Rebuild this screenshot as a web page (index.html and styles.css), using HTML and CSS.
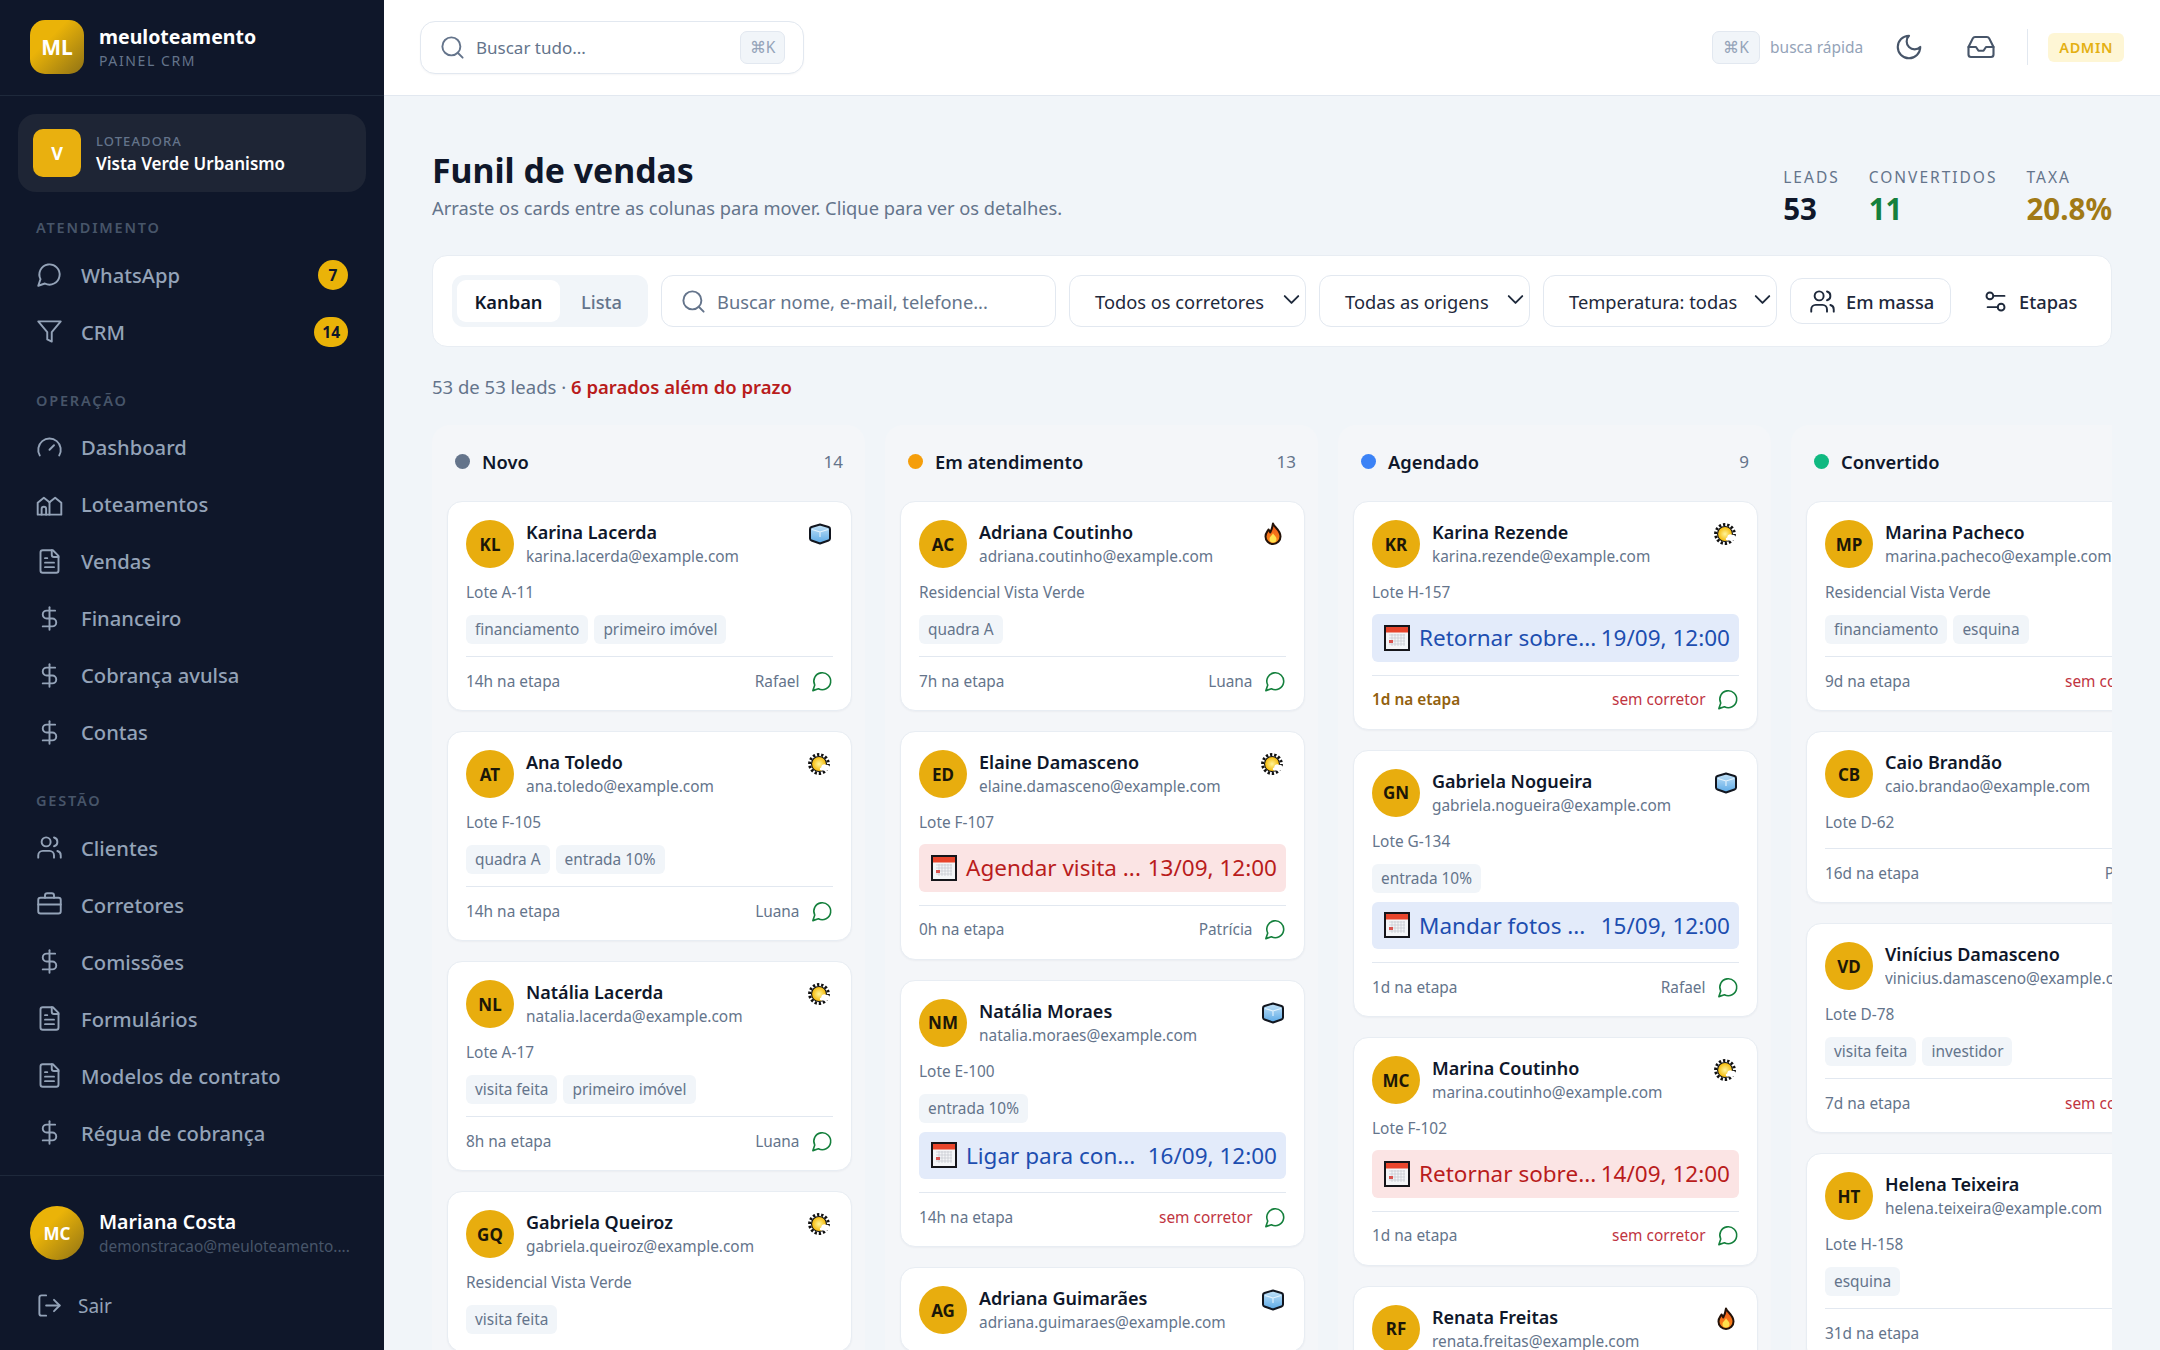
FILE: index.html
```html
<!DOCTYPE html>
<html lang="pt-BR">
<head>
<meta charset="utf-8">
<title>Funil de vendas</title>
<link rel="stylesheet" href="styles.css">
</head>
<body>
<svg class="defs" width="0" height="0" aria-hidden="true">
  <symbol id="i-chat" viewBox="0 0 24 24"><path d="M7.9 20A9 9 0 1 0 4 16.1L2 22Z"/></symbol>
  <symbol id="i-filter" viewBox="0 0 24 24"><path d="M22 3H2l8 9.46V19l4 2v-8.54L22 3Z"/></symbol>
  <symbol id="i-gauge" viewBox="0 0 24 24"><path d="m12 14 4-4"/><path d="M3.34 19a10 10 0 1 1 17.32 0"/></symbol>
  <symbol id="i-homes" viewBox="0 0 24 24"><path d="M1.5 21V10.5L7 6l5 4 5-4 5.500 4.500V21Z"/><path d="M12 10v11"/><path d="M5 21v-5a2 2 0 0 1 4 0v5"/></symbol>
  <symbol id="i-file" viewBox="0 0 24 24"><path d="M15 2H6a2 2 0 0 0-2 2v16a2 2 0 0 0 2 2h12a2 2 0 0 0 2-2V7Z"/><path d="M14 2v4a2 2 0 0 0 2 2h4"/><path d="M10 9H8"/><path d="M16 13H8"/><path d="M16 17H8"/></symbol>
  <symbol id="i-dollar" viewBox="0 0 24 24"><path d="M12 2v20"/><path d="M17 5H9.500a3.500 3.500 0 0 0 0 7h5a3.500 3.500 0 0 1 0 7H6"/></symbol>
  <symbol id="i-users" viewBox="0 0 24 24"><path d="M16 21v-2a4 4 0 0 0-4-4H6a4 4 0 0 0-4 4v2"/><circle cx="9" cy="7" r="4"/><path d="M22 21v-2a4 4 0 0 0-3-3.870"/><path d="M16 3.130a4 4 0 0 1 0 7.750"/></symbol>
  <symbol id="i-case" viewBox="0 0 24 24"><path d="M16 6V4a2 2 0 0 0-2-2h-4a2 2 0 0 0-2 2v2"/><rect x="2" y="6" width="20" height="14" rx="2"/><path d="M2 12h20"/></symbol>
  <symbol id="i-logout" viewBox="0 0 24 24"><path d="M9 21H5a2 2 0 0 1-2-2V5a2 2 0 0 1 2-2h4"/><path d="m16 17 5-5-5-5"/><path d="M21 12H9"/></symbol>
  <symbol id="i-search" viewBox="0 0 24 24"><circle cx="11" cy="11" r="8"/><path d="m21 21-4.350-4.350"/></symbol>
  <symbol id="i-moon" viewBox="0 0 24 24"><path d="M12 3a6 6 0 0 0 9 9 9 9 0 1 1-9-9Z"/></symbol>
  <symbol id="i-inbox" viewBox="0 0 24 24"><path d="M22 12h-6l-2 3h-4l-2-3H2"/><path d="M5.450 5.110 2 12v6a2 2 0 0 0 2 2h16a2 2 0 0 0 2-2v-6l-3.450-6.890A2 2 0 0 0 16.760 4H7.240a2 2 0 0 0-1.790 1.110Z"/></symbol>
  <symbol id="i-sliders" viewBox="0 0 24 24"><path d="M20 7h-9"/><path d="M14 17H5"/><circle cx="17" cy="17" r="3"/><circle cx="7" cy="7" r="3"/></symbol>
  <symbol id="i-chev" viewBox="0 0 24 24"><path d="m6 9 6 6 6-6"/></symbol>

  <linearGradient id="g-ice" x1="0" y1="0" x2="0" y2="1"><stop offset="0" stop-color="#c4e3f8"/><stop offset="1" stop-color="#5ba9e6"/></linearGradient>
  <radialGradient id="g-sun"><stop offset="0" stop-color="#fff59a"/><stop offset="1" stop-color="#f5bb0c"/></radialGradient>
  <linearGradient id="g-fire" x1="0" y1="0" x2="0" y2="1"><stop offset="0" stop-color="#ee5518"/><stop offset="1" stop-color="#fb8c1a"/></linearGradient>

  <symbol id="e-ice" viewBox="0 0 24 24"><path d="M12 2.500 20.500 5q1.500.500 1.500 2v9.500q0 1.500-1.500 2L12 21.500l-8.500-3Q2 18 2 16.500V7q0-1.500 1.500-2Z" fill="url(#g-ice)" stroke="#12161f" stroke-width="2" stroke-linejoin="round"/><path d="M4 7.500 12 10l8-2.500M12 10v5" fill="none" stroke="#e4f3fd" stroke-width="1.100"/></symbol>
  <symbol id="e-sun" viewBox="0 0 24 24"><circle cx="11" cy="12" r="9.400" fill="none" stroke="#111" stroke-width="3" stroke-dasharray="2.300 1.900"/><circle cx="11" cy="12" r="8" fill="#111"/><circle cx="11" cy="12" r="6.900" fill="url(#g-sun)"/><path d="M13.500 18.500c-2 0-2.300-2.700-.3-3 .1-2.800 3-4 5-2.600 1.800-.5 3.300.6 3.500 2.300 1 .5 1 3.300-1 3.300Z" fill="#fff"/></symbol>
  <symbol id="e-fire" viewBox="0 0 24 24"><path d="M12 1.500c1 3.500 7.500 6.500 7.500 13a7.500 7.500 0 0 1-15 0c0-3.500 2-5 3-7 1 1 1.500 2 1.700 3C10.500 8 11.500 5 12 1.500Z" fill="url(#g-fire)" stroke="#231208" stroke-width="2" stroke-linejoin="round"/><path d="M12 11c.5 2 3.500 3.500 3.500 6a3.500 3.500 0 0 1-7 0c0-2.500 3-3.500 3.500-6Z" fill="#ffe14d"/></symbol>
  <symbol id="e-cal" viewBox="0 0 26 26"><rect x="1" y="1" width="24" height="24" fill="#f4f5f7" stroke="#15151a" stroke-width="2"/><rect x="2" y="2" width="22" height="5.500" fill="#e8452c"/><path d="M5 10h16M5 13h16M5 16h16M5 19h16M8 9v12M11 9v12M14 9v12M17 9v12M20 9v12" stroke="#c3c7ce" stroke-width=".7"/><rect x="5" y="15" width="4" height="3" fill="#d9534f"/></symbol>
</svg>

<div class="app">
  <aside class="sidebar">
    <div class="brand">
      <div class="brand-logo">ML</div>
      <div>
        <div class="brand-name">meuloteamento</div>
        <div class="brand-sub">PAINEL CRM</div>
      </div>
    </div>
    <div class="company">
      <div class="company-logo">V</div>
      <div class="company-info">
        <div class="company-label">LOTEADORA</div>
        <div class="company-name">Vista Verde Urbanismo</div>
      </div>
    </div>
    <nav class="nav">
      <div class="nav-label">ATENDIMENTO</div>
      <div class="nav-item"><svg class="ico"><use href="#i-chat"/></svg><span class="nav-text">WhatsApp</span><span class="nav-badge">7</span></div>
      <div class="nav-item"><svg class="ico"><use href="#i-filter"/></svg><span class="nav-text">CRM</span><span class="nav-badge">14</span></div>
      <div class="nav-label nav-label-gap">OPERAÇÃO</div>
      <div class="nav-item"><svg class="ico"><use href="#i-gauge"/></svg><span class="nav-text">Dashboard</span></div>
      <div class="nav-item"><svg class="ico"><use href="#i-homes"/></svg><span class="nav-text">Loteamentos</span></div>
      <div class="nav-item"><svg class="ico"><use href="#i-file"/></svg><span class="nav-text">Vendas</span></div>
      <div class="nav-item"><svg class="ico"><use href="#i-dollar"/></svg><span class="nav-text">Financeiro</span></div>
      <div class="nav-item"><svg class="ico"><use href="#i-dollar"/></svg><span class="nav-text">Cobrança avulsa</span></div>
      <div class="nav-item"><svg class="ico"><use href="#i-dollar"/></svg><span class="nav-text">Contas</span></div>
      <div class="nav-label nav-label-gap">GESTÃO</div>
      <div class="nav-item"><svg class="ico"><use href="#i-users"/></svg><span class="nav-text">Clientes</span></div>
      <div class="nav-item"><svg class="ico"><use href="#i-case"/></svg><span class="nav-text">Corretores</span></div>
      <div class="nav-item"><svg class="ico"><use href="#i-dollar"/></svg><span class="nav-text">Comissões</span></div>
      <div class="nav-item"><svg class="ico"><use href="#i-file"/></svg><span class="nav-text">Formulários</span></div>
      <div class="nav-item"><svg class="ico"><use href="#i-file"/></svg><span class="nav-text">Modelos de contrato</span></div>
      <div class="nav-item"><svg class="ico"><use href="#i-dollar"/></svg><span class="nav-text">Régua de cobrança</span></div>
    </nav>
    <div class="side-foot">
      <div class="user">
        <div class="user-avatar">MC</div>
        <div class="user-info">
          <div class="user-name">Mariana Costa</div>
          <div class="user-mail">demonstracao@meuloteamento....</div>
        </div>
      </div>
      <div class="logout"><svg class="ico"><use href="#i-logout"/></svg><span>Sair</span></div>
    </div>
  </aside>

  <div class="main">
    <header class="topbar">
      <div class="global-search">
        <svg class="ico ico-search"><use href="#i-search"/></svg>
        <span class="global-text">Buscar tudo...</span>
        <span class="kbd">⌘K</span>
      </div>
      <div class="top-right">
        <span class="kbd kbd-wide">⌘K</span>
        <span class="top-hint">busca rápida</span>
        <svg class="ico top-ico top-moon"><use href="#i-moon"/></svg>
        <svg class="ico top-ico top-inbox"><use href="#i-inbox"/></svg>
        <span class="top-sep"></span>
        <span class="role">ADMIN</span>
      </div>
    </header>

    <main class="content">
      <div class="heading">
        <div>
          <h1 class="title">Funil de vendas</h1>
          <p class="subtitle">Arraste os cards entre as colunas para mover. Clique para ver os detalhes.</p>
        </div>
        <div class="stats">
          <div><div class="stat-label">LEADS</div><div class="stat-value">53</div></div>
          <div><div class="stat-label">CONVERTIDOS</div><div class="stat-value v-green">11</div></div>
          <div><div class="stat-label">TAXA</div><div class="stat-value v-gold">20.8%</div></div>
        </div>
      </div>

      <div class="toolbar">
        <div class="tabs"><span class="tab tab-on">Kanban</span><span class="tab">Lista</span></div>
        <div class="field field-search"><svg class="ico ico-search"><use href="#i-search"/></svg><span class="placeholder">Buscar nome, e-mail, telefone...</span></div>
        <div class="field sel sel-1"><span>Todos os corretores</span><svg class="chev"><use href="#i-chev"/></svg></div>
        <div class="field sel sel-2"><span>Todas as origens</span><svg class="chev"><use href="#i-chev"/></svg></div>
        <div class="field sel sel-3"><span>Temperatura: todas</span><svg class="chev"><use href="#i-chev"/></svg></div>
        <div class="btn btn-line"><svg class="ico btn-ico"><use href="#i-users"/></svg>Em massa</div>
        <div class="btn"><svg class="ico btn-ico"><use href="#i-sliders"/></svg>Etapas</div>
      </div>

      <p class="summary">53 de 53 leads · <strong class="late">6 parados além do prazo</strong></p>

      <div class="board">

        <section class="col">
          <div class="col-head"><span class="dot d-slate"></span><span class="col-name">Novo</span><span class="col-count">14</span></div>
          <article class="card">
            <div class="card-top"><div class="avatar">KL</div><div class="who"><div class="name">Karina Lacerda</div><div class="mail">karina.lacerda@example.com</div></div><svg class="temp"><use href="#e-ice"/></svg></div>
            <div class="lot">Lote A-11</div>
            <div class="tags"><span class="tag">financiamento</span><span class="tag">primeiro imóvel</span></div>
            <div class="foot"><span>14h na etapa</span><span class="owner">Rafael</span><svg class="ico wa"><use href="#i-chat"/></svg></div>
          </article>
          <article class="card">
            <div class="card-top"><div class="avatar">AT</div><div class="who"><div class="name">Ana Toledo</div><div class="mail">ana.toledo@example.com</div></div><svg class="temp"><use href="#e-sun"/></svg></div>
            <div class="lot">Lote F-105</div>
            <div class="tags"><span class="tag">quadra A</span><span class="tag">entrada 10%</span></div>
            <div class="foot"><span>14h na etapa</span><span class="owner">Luana</span><svg class="ico wa"><use href="#i-chat"/></svg></div>
          </article>
          <article class="card">
            <div class="card-top"><div class="avatar">NL</div><div class="who"><div class="name">Natália Lacerda</div><div class="mail">natalia.lacerda@example.com</div></div><svg class="temp"><use href="#e-sun"/></svg></div>
            <div class="lot">Lote A-17</div>
            <div class="tags"><span class="tag">visita feita</span><span class="tag">primeiro imóvel</span></div>
            <div class="foot"><span>8h na etapa</span><span class="owner">Luana</span><svg class="ico wa"><use href="#i-chat"/></svg></div>
          </article>
          <article class="card">
            <div class="card-top"><div class="avatar">GQ</div><div class="who"><div class="name">Gabriela Queiroz</div><div class="mail">gabriela.queiroz@example.com</div></div><svg class="temp"><use href="#e-sun"/></svg></div>
            <div class="lot">Residencial Vista Verde</div>
            <div class="tags"><span class="tag">visita feita</span></div>
          </article>
        </section>

        <section class="col">
          <div class="col-head"><span class="dot d-amber"></span><span class="col-name">Em atendimento</span><span class="col-count">13</span></div>
          <article class="card">
            <div class="card-top"><div class="avatar">AC</div><div class="who"><div class="name">Adriana Coutinho</div><div class="mail">adriana.coutinho@example.com</div></div><svg class="temp"><use href="#e-fire"/></svg></div>
            <div class="lot">Residencial Vista Verde</div>
            <div class="tags"><span class="tag">quadra A</span></div>
            <div class="foot"><span>7h na etapa</span><span class="owner">Luana</span><svg class="ico wa"><use href="#i-chat"/></svg></div>
          </article>
          <article class="card">
            <div class="card-top"><div class="avatar">ED</div><div class="who"><div class="name">Elaine Damasceno</div><div class="mail">elaine.damasceno@example.com</div></div><svg class="temp"><use href="#e-sun"/></svg></div>
            <div class="lot">Lote F-107</div>
            <div class="task task-red"><svg class="cal"><use href="#e-cal"/></svg><span class="task-name">Agendar visita ...</span><span>13/09, 12:00</span></div>
            <div class="foot"><span>0h na etapa</span><span class="owner">Patrícia</span><svg class="ico wa"><use href="#i-chat"/></svg></div>
          </article>
          <article class="card">
            <div class="card-top"><div class="avatar">NM</div><div class="who"><div class="name">Natália Moraes</div><div class="mail">natalia.moraes@example.com</div></div><svg class="temp"><use href="#e-ice"/></svg></div>
            <div class="lot">Lote E-100</div>
            <div class="tags"><span class="tag">entrada 10%</span></div>
            <div class="task task-blue"><svg class="cal"><use href="#e-cal"/></svg><span class="task-name">Ligar para con...</span><span>16/09, 12:00</span></div>
            <div class="foot"><span>14h na etapa</span><span class="owner none">sem corretor</span><svg class="ico wa"><use href="#i-chat"/></svg></div>
          </article>
          <article class="card">
            <div class="card-top"><div class="avatar">AG</div><div class="who"><div class="name">Adriana Guimarães</div><div class="mail">adriana.guimaraes@example.com</div></div><svg class="temp"><use href="#e-ice"/></svg></div>
          </article>
        </section>

        <section class="col">
          <div class="col-head"><span class="dot d-blue"></span><span class="col-name">Agendado</span><span class="col-count">9</span></div>
          <article class="card">
            <div class="card-top"><div class="avatar">KR</div><div class="who"><div class="name">Karina Rezende</div><div class="mail">karina.rezende@example.com</div></div><svg class="temp"><use href="#e-sun"/></svg></div>
            <div class="lot">Lote H-157</div>
            <div class="task task-blue"><svg class="cal"><use href="#e-cal"/></svg><span class="task-name">Retornar sobre...</span><span>19/09, 12:00</span></div>
            <div class="foot"><span class="aging">1d na etapa</span><span class="owner none">sem corretor</span><svg class="ico wa"><use href="#i-chat"/></svg></div>
          </article>
          <article class="card">
            <div class="card-top"><div class="avatar">GN</div><div class="who"><div class="name">Gabriela Nogueira</div><div class="mail">gabriela.nogueira@example.com</div></div><svg class="temp"><use href="#e-ice"/></svg></div>
            <div class="lot">Lote G-134</div>
            <div class="tags"><span class="tag">entrada 10%</span></div>
            <div class="task task-blue"><svg class="cal"><use href="#e-cal"/></svg><span class="task-name">Mandar fotos ...</span><span>15/09, 12:00</span></div>
            <div class="foot"><span>1d na etapa</span><span class="owner">Rafael</span><svg class="ico wa"><use href="#i-chat"/></svg></div>
          </article>
          <article class="card">
            <div class="card-top"><div class="avatar">MC</div><div class="who"><div class="name">Marina Coutinho</div><div class="mail">marina.coutinho@example.com</div></div><svg class="temp"><use href="#e-sun"/></svg></div>
            <div class="lot">Lote F-102</div>
            <div class="task task-red"><svg class="cal"><use href="#e-cal"/></svg><span class="task-name">Retornar sobre...</span><span>14/09, 12:00</span></div>
            <div class="foot"><span>1d na etapa</span><span class="owner none">sem corretor</span><svg class="ico wa"><use href="#i-chat"/></svg></div>
          </article>
          <article class="card">
            <div class="card-top"><div class="avatar">RF</div><div class="who"><div class="name">Renata Freitas</div><div class="mail">renata.freitas@example.com</div></div><svg class="temp"><use href="#e-fire"/></svg></div>
          </article>
        </section>

        <section class="col">
          <div class="col-head"><span class="dot d-green"></span><span class="col-name">Convertido</span><span class="col-count">11</span></div>
          <article class="card">
            <div class="card-top"><div class="avatar">MP</div><div class="who"><div class="name">Marina Pacheco</div><div class="mail">marina.pacheco@example.com</div></div><svg class="temp"><use href="#e-sun"/></svg></div>
            <div class="lot">Residencial Vista Verde</div>
            <div class="tags"><span class="tag">financiamento</span><span class="tag">esquina</span></div>
            <div class="foot"><span>9d na etapa</span><span class="owner none">sem corretor</span><svg class="ico wa"><use href="#i-chat"/></svg></div>
          </article>
          <article class="card">
            <div class="card-top"><div class="avatar">CB</div><div class="who"><div class="name">Caio Brandão</div><div class="mail">caio.brandao@example.com</div></div><svg class="temp"><use href="#e-sun"/></svg></div>
            <div class="lot">Lote D-62</div>
            <div class="foot"><span>16d na etapa</span><span class="owner">Patrícia</span><svg class="ico wa"><use href="#i-chat"/></svg></div>
          </article>
          <article class="card">
            <div class="card-top"><div class="avatar">VD</div><div class="who"><div class="name">Vinícius Damasceno</div><div class="mail">vinicius.damasceno@example.com</div></div><svg class="temp"><use href="#e-sun"/></svg></div>
            <div class="lot">Lote D-78</div>
            <div class="tags"><span class="tag">visita feita</span><span class="tag">investidor</span></div>
            <div class="foot"><span>7d na etapa</span><span class="owner none">sem corretor</span><svg class="ico wa"><use href="#i-chat"/></svg></div>
          </article>
          <article class="card">
            <div class="card-top"><div class="avatar">HT</div><div class="who"><div class="name">Helena Teixeira</div><div class="mail">helena.teixeira@example.com</div></div><svg class="temp"><use href="#e-sun"/></svg></div>
            <div class="lot">Lote H-158</div>
            <div class="tags"><span class="tag">esquina</span></div>
            <div class="foot"><span>31d na etapa</span><span class="owner">Rafael</span><svg class="ico wa"><use href="#i-chat"/></svg></div>
          </article>
        </section>

      </div>
    </main>
  </div>
</div>
</body>
</html>
```

FILE: styles.css
```css
* { box-sizing: border-box; }
html, body { margin: 0; height: 100%; overflow: hidden; }
body { font-family: "Noto Sans", "Open Sans", sans-serif; color: #0f172a; background: #f1f5f9; }
.defs { position: absolute; }
.ico { width: 27px; height: 27px; fill: none; stroke: currentColor; stroke-width: 1.7; stroke-linecap: round; stroke-linejoin: round; flex: none; }

.app { display: flex; height: 1350px; }

/* Sidebar */
.sidebar { width: 384px; flex: none; height: 1350px; background: #0f172a; display: flex; flex-direction: column; }
.brand { height: 96px; padding: 0 30px 1px; display: flex; align-items: center; gap: 15px; border-bottom: 1px solid #1e293b; }
.brand-logo { width: 54px; height: 54px; border-radius: 15px; background: linear-gradient(135deg, #eab308 35%, #8f7215); color: #fff; font-weight: 700; font-size: 21px; display: flex; align-items: center; justify-content: center; }
.brand-name { font-size: 19.5px; font-weight: 700; color: #fff; line-height: 28px; }
.brand-sub { font-size: 14px; letter-spacing: 1.6px; color: #64748b; line-height: 20px; }
.company { margin: 18px 18px 0; height: 78px; border-radius: 18px; background: #1e2535; padding: 0 15px; display: flex; align-items: center; gap: 15px; }
.company-logo { width: 48px; height: 48px; border-radius: 10px; background: #e9b00f; color: #fff; font-weight: 700; font-size: 18px; display: flex; align-items: center; justify-content: center; }
.company-info { padding-top: 2px; }
.company-label { font-size: 13px; letter-spacing: 1.1px; color: #64748b; line-height: 20px; font-weight: 500; }
.company-name { font-size: 17px; font-weight: 600; color: #fff; line-height: 26px; }
.nav { padding: 24px 0 0 36px; }
.nav-label { font-size: 14.5px; font-weight: 600; letter-spacing: 1.8px; color: #475569; line-height: 22px; margin-bottom: 8px; }
.nav-label-gap { margin-top: 28.5px; }
.nav-item { height: 57px; display: flex; align-items: center; color: #94a3b8; padding-right: 36px; }
.nav-text { font-size: 20.2px; font-weight: 500; margin-left: 18px; flex: 1; }
.nav-badge { min-width: 30px; height: 30px; padding: 0 8px; border-radius: 15px; background: #eab308; color: #0f172a; font-size: 15.5px; font-weight: 700; display: flex; align-items: center; justify-content: center; }
.side-foot { margin-top: auto; border-top: 1px solid #1e293b; padding: 30px 30px 0; height: 175px; }
.user { display: flex; align-items: center; gap: 15px; }
.user-avatar { width: 54px; height: 54px; border-radius: 50%; flex: none; background: linear-gradient(135deg, #eab308 35%, #8f7215); color: #fff; font-size: 17px; font-weight: 700; display: flex; align-items: center; justify-content: center; }
.user-info { min-width: 0; }
.user-name { font-size: 19.5px; font-weight: 600; color: #fff; line-height: 28px; }
.user-mail { font-size: 15.4px; color: #475569; line-height: 22px; white-space: nowrap; }
.logout { margin: 32px 0 0 6px; display: flex; align-items: center; gap: 15px; color: #94a3b8; font-size: 19px; }

/* Main */
.main { flex: 1; min-width: 0; display: flex; flex-direction: column; }
.topbar { height: 96px; flex: none; background: #fff; border-bottom: 1px solid #e2e8f0; padding: 0 36px 1px; display: flex; align-items: center; justify-content: space-between; }
.global-search { width: 384px; height: 53px; border: 1px solid #e2e8f0; border-radius: 15px; display: flex; align-items: center; padding: 0 18px; background: #fff; box-shadow: 0 1px 2px rgba(15, 23, 42, .04); }
.ico-search { color: #64748b; }
.global-text { margin-left: 10px; flex: 1; font-size: 17px; color: #64748b; }
.kbd { height: 33px; min-width: 45px; padding: 0 7px; border: 1px solid #e2e8f0; border-radius: 7px; background: #f1f5f9; color: #94a3b8; font-size: 15.5px; display: flex; align-items: center; justify-content: center; }
.kbd-wide { width: 48px; }
.top-right { display: flex; align-items: center; }
.top-hint { margin-left: 10px; font-size: 15.5px; color: #94a3b8; }
.top-ico { width: 30px; height: 30px; color: #475569; }
.top-moon { margin-left: 31px; }
.top-inbox { margin-left: 42px; }
.top-sep { width: 1px; height: 36px; background: #e2e8f0; margin: 0 20px 0 31px; }
.role { height: 29px; padding: 0 11px; border-radius: 6px; background: #fef6d5; color: #e4b012; font-size: 14.5px; font-weight: 600; letter-spacing: .6px; display: flex; align-items: center; }

.content { flex: 1; min-height: 0; padding: 50px 48px 0; display: flex; flex-direction: column; }
.heading { height: 76px; flex: none; display: flex; justify-content: space-between; align-items: flex-start; }
.title { margin: 0; font-size: 33.8px; font-weight: 700; line-height: 48px; }
.subtitle { margin: 0; font-size: 18.3px; color: #64748b; line-height: 28px; }
.stats { display: flex; gap: 29px; padding-top: 20px; }
.stat-label { font-size: 15.5px; letter-spacing: 2px; color: #64748b; line-height: 22px; }
.stat-value { font-size: 29.5px; font-weight: 700; line-height: 42px; }
.v-green { color: #15803d; }
.v-gold { color: #a17a16; }

.toolbar { margin-top: 33px; height: 92px; flex: none; background: #fff; border: 1px solid #e8edf3; border-radius: 15px; padding: 0 19px; display: flex; align-items: center; gap: 13px; }
.tabs { height: 52px; width: 196px; padding: 5px; border-radius: 12px; background: #f1f5f9; display: flex; flex: none; }
.tab { height: 42px; width: 83px; flex: none; display: flex; align-items: center; justify-content: center; font-size: 18.3px; font-weight: 500; color: #64748b; }
.tab-on { width: 103px; background: #fff; border-radius: 9px; color: #0f172a; font-weight: 600; }
.field { height: 52px; border: 1px solid #e2e8f0; border-radius: 12px; background: #fff; display: flex; align-items: center; flex: none; font-size: 18.3px; color: #1e293b; white-space: nowrap; }
.field-search { width: 395px; padding: 0 18px; }
.placeholder { margin-left: 10px; color: #64748b; }
.sel { justify-content: space-between; padding: 0 0 0 25px; }
.sel-1 { width: 237px; }
.sel-2 { width: 211px; }
.sel-3 { width: 234px; }
.chev { width: 27px; height: 27px; fill: none; stroke: #1e293b; stroke-width: 1.7; stroke-linecap: round; stroke-linejoin: round; margin-top: -3px; }
.btn { height: 46px; padding: 0 18px; display: flex; align-items: center; gap: 10px; flex: none; font-size: 18.3px; font-weight: 500; color: #1e293b; border-radius: 12px; white-space: nowrap; }
.btn-line { border: 1px solid #e2e8f0; width: 161px; }
.btn-ico { color: #1e293b; }

.summary { margin: 25px 0 0; font-size: 18.5px; line-height: 30px; color: #64748b; }
.late { color: #b91c1c; font-weight: 600; }

.board { margin-top: 23px; flex: 1; min-height: 0; display: flex; gap: 20px; overflow: hidden; }
.col { width: 433px; flex: none; padding: 21px 13px 0 15px; background: #f4f6f9; border-radius: 18px 18px 0 0; }
.col-head { height: 30px; display: flex; align-items: center; padding: 0 9px 0 8px; margin-bottom: 25px; }
.dot { width: 15px; height: 15px; border-radius: 50%; flex: none; }
.d-slate { background: #64748b; }
.d-amber { background: #f59e0b; }
.d-blue { background: #3b82f6; }
.d-green { background: #10b981; }
.col-name { margin-left: 12px; font-size: 18.3px; font-weight: 600; flex: 1; }
.col-count { font-size: 17px; color: #64748b; }

.card { background: #fff; border: 1px solid #e8edf3; border-radius: 15px; padding: 18px 18px 17px; margin-bottom: 20px; box-shadow: 0 1px 2px rgba(15, 23, 42, .04); }
.card-top { display: flex; align-items: flex-start; }
.avatar { width: 48px; height: 48px; flex: none; border-radius: 50%; background: #e8ad0e; color: #1c1708; font-size: 17px; font-weight: 700; display: flex; align-items: center; justify-content: center; }
.who { margin: -1px 0 -1px 12px; flex: 1; min-width: 0; }
.name { font-size: 18px; font-weight: 600; line-height: 26px; white-space: nowrap; }
.mail { font-size: 15.4px; line-height: 24px; color: #64748b; white-space: nowrap; overflow: hidden; }
.temp { width: 24px; height: 24px; flex: none; margin: 2px 1px 0 8px; }
.lot { margin-top: 13px; font-size: 15.4px; line-height: 24px; color: #64748b; }
.tags { margin-top: 10px; display: flex; gap: 6px; }
.tag { height: 29px; padding: 0 9px; border-radius: 6px; background: #f1f5f9; color: #64748b; font-size: 15.4px; display: flex; align-items: center; }
.tags + .foot { margin-top: 12px; }
.task { margin-top: 9px; height: 47.5px; border-radius: 6px; padding: 0 9px 0 12px; display: flex; align-items: center; justify-content: space-between; font-size: 22.5px; white-space: nowrap; }
.cal { width: 26px; height: 26px; flex: none; margin-right: 9px; }
.task-name { flex: 1; min-width: 0; }
.task-red { background: #fbe4e4; color: #b91c1c; }
.task-blue { background: #e3ebfa; color: #1d4eb0; }
.foot { margin-top: 13px; padding-top: 12px; border-top: 1px solid #e2e8f0; display: flex; align-items: center; font-size: 15.4px; color: #64748b; box-sizing: content-box; height: 24px; }
.foot > span:first-child { flex: 1; }
.owner { margin-right: 11px; }
.none { color: #c0343f; }
.aging { color: #92610e; font-weight: 600; }
.wa { width: 22.5px; height: 22.5px; color: #15803d; }
```
